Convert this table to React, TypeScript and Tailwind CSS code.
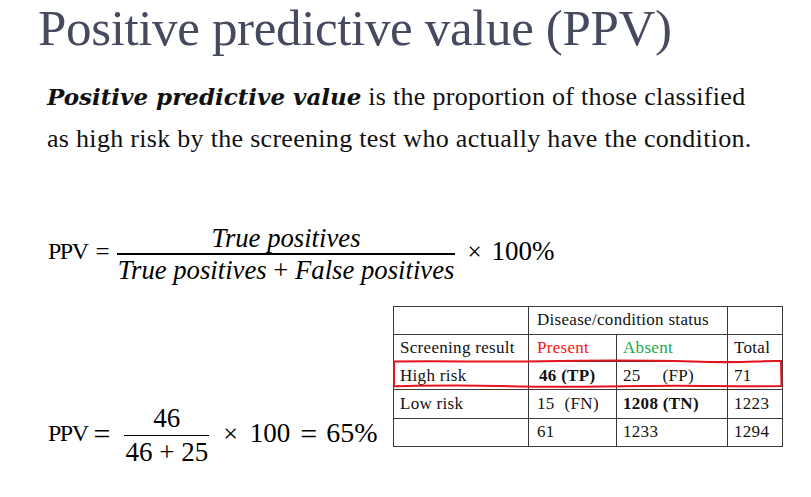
import { FunctionComponent, ReactNode } from "react";

const serif = "font-['Liberation_Serif',serif]";

const Fraction: FunctionComponent<{ top: ReactNode; bottom: ReactNode; lh: string }> = ({ top, bottom, lh }) => {
  return (
    <span className="inline-flex flex-col items-center">
      <span className={`${lh} px-[1px]`}>{top}</span>
      <span className="block w-full h-[1.5px] bg-black"></span>
      <span className={`${lh} px-[1px]`}>{bottom}</span>
    </span>
  );
};

const RedBox: FunctionComponent = () => {
  return (
    <svg className="absolute left-[-1px] top-[53px] pointer-events-none" width="392" height="30" viewBox="0 0 392 30">
      <path
        d="M2 2.5 C60 2 100 3 150 2.2 S240 0.8 300 2.6 S360 1.6 389 2 L389.5 27 C340 27.8 300 26 250 27 S160 28.4 110 27 S40 26.6 2 27.2 Z"
        fill="none"
        stroke="#e3141c"
        strokeWidth="2"
      />
    </svg>
  );
};

const ScreeningTable: FunctionComponent = () => {
  const td = "border border-[#3a3a3a] px-[6px] align-middle";
  return (
    <div className="relative">
      <table className={`border-collapse text-[17px] tracking-[0.3px] text-[#111] ${serif}`}>
        <colgroup>
          <col className="w-[135px]" />
          <col className="w-[88px]" />
          <col className="w-[111px]" />
          <col className="w-[55px]" />
        </colgroup>
        <tbody>
          <tr className="h-[28px]">
            <td className={td}></td>
            <td className={`${td} pl-[8px]`} colSpan={2}>Disease/condition status</td>
            <td className={td}></td>
          </tr>
          <tr className="h-[27px]">
            <td className={td}>Screening result</td>
            <td className={`${td} pl-[8px] text-[#ff1010]`}>Present</td>
            <td className={`${td} text-[#21a84a]`}>Absent</td>
            <td className={td}>Total</td>
          </tr>
          <tr className="h-[28.5px]">
            <td className={td}>High risk</td>
            <td className={`${td} pl-[10px] font-bold`}>46 (TP)</td>
            <td className={td}>
              25<span className="ml-[22px]">(FP)</span>
            </td>
            <td className={td}>71</td>
          </tr>
          <tr className="h-[28.5px]">
            <td className={td}>Low risk</td>
            <td className={`${td} pl-[8px]`}>
              15<span className="ml-[10px]">(FN)</span>
            </td>
            <td className={`${td} font-bold`}>1208 (TN)</td>
            <td className={td}>1223</td>
          </tr>
          <tr className="h-[28px]">
            <td className={td}></td>
            <td className={`${td} pl-[8px]`}>61</td>
            <td className={td}>1233</td>
            <td className={td}>1294</td>
          </tr>
        </tbody>
      </table>
      <RedBox />
    </div>
  );
};

const App: FunctionComponent = () => {
  return (
    <div className={`w-[811px] h-[497px] bg-white overflow-hidden ${serif}`}>
      <h1 className="pl-[38px] text-[51px] leading-[56px] text-[#464a5f] tracking-[-0.35px]">
        Positive predictive value (PPV)
      </h1>

      <p className="pl-[47px] mt-[20px] text-[26px] leading-[42px] tracking-[0.3px] text-[#111]">
        <b className="italic font-['DejaVu_Serif',serif] text-[23px] tracking-normal">Positive predictive value</b> is the proportion of those classified
        <br />
        as high risk by the screening test who actually have the condition.
      </p>

      <div className="flex items-center pl-[48px] mt-[58px] text-black">
        <span className="text-[24px] tracking-[-1.5px]">PPV</span>
        <span className="ml-[8px] mr-[7px] text-[25px]">=</span>
        <span className="text-[26.7px]">
          <Fraction
            lh="leading-[30px]"
            top={<i>True positives</i>}
            bottom={<><i>True positives</i> + <i>False positives</i></>}
          />
        </span>
        <span className="ml-[12px] text-[25px]">×</span>
        <span className="ml-[10px] text-[27px]">100%</span>
      </div>

      <div className="flex items-start mt-[21px]">
        <div className="flex items-center pl-[48px] mt-[92px] text-black">
          <span className="text-[24px] tracking-[-1.5px]">PPV</span>
          <span className="ml-[6px] mr-[14px] text-[30px]">=</span>
          <span className="text-[27px]">
            <Fraction lh="leading-[33px]" top="46" bottom="46 + 25" />
          </span>
          <span className="ml-[14px] text-[26px]">×</span>
          <span className="ml-[12px] text-[27px]">100</span>
          <span className="ml-[10px] mr-[9px] text-[30px]">=</span>
          <span className="text-[28px]">65%</span>
        </div>
        <div className="ml-auto mr-[28px]">
          <ScreeningTable />
        </div>
      </div>
    </div>
  );
};

export default App;
